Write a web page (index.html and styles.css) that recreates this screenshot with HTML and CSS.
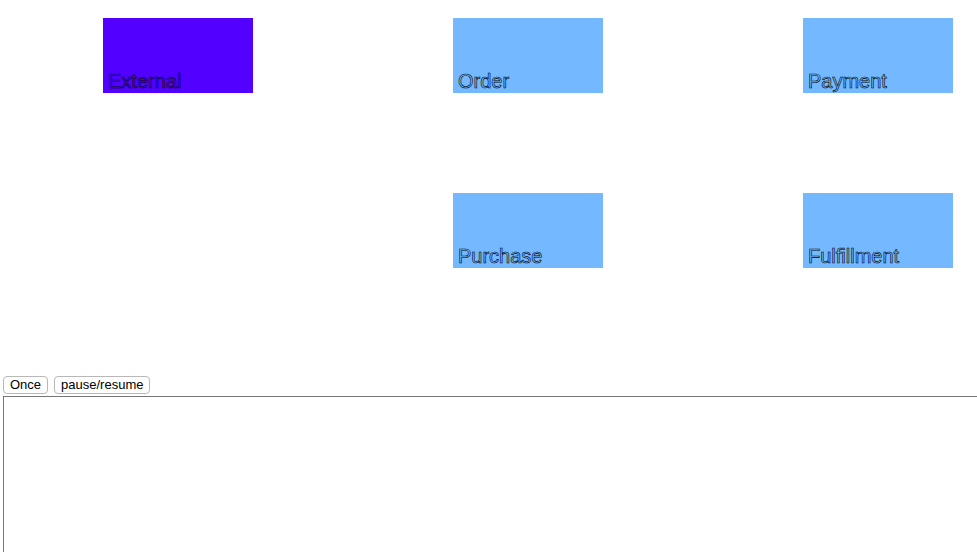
FILE: index.html
```html
<!DOCTYPE html>
<html>
<head>
<meta charset="utf-8">
<link rel="stylesheet" href="styles.css">
</head>
<body>
<svg class="diagram" width="977" height="376" viewBox="0 0 977 376">
  <g class="node node-active">
    <rect x="103" y="18" width="150" height="75"></rect>
    <text x="108" y="88">External</text>
  </g>
  <g class="node">
    <rect x="453" y="18" width="150" height="75"></rect>
    <text x="458" y="88">Order</text>
  </g>
  <g class="node">
    <rect x="803" y="18" width="150" height="75"></rect>
    <text x="808" y="88">Payment</text>
  </g>
  <g class="node">
    <rect x="453" y="193" width="150" height="75"></rect>
    <text x="458" y="263">Purchase</text>
  </g>
  <g class="node">
    <rect x="803" y="193" width="150" height="75"></rect>
    <text x="808" y="263">Fulfillment</text>
  </g>
</svg>
<div class="controls">
  <button class="btn">Once</button>
  <button class="btn">pause/resume</button>
</div>
<textarea class="log"></textarea>
</body>
</html>
```
FILE: styles.css
```css
html, body {
  margin: 0;
  padding: 0;
  background: #fff;
  overflow: hidden;
}
.diagram {
  display: block;
}
.node rect {
  fill: #74b9ff;
}
.node-active rect {
  fill: #5200ff;
}
.node text {
  font-family: "Liberation Sans", Arial, sans-serif;
  font-size: 20px;
  fill: none;
  stroke: #000;
  stroke-width: 0.6px;
}
.controls {
  display: flex;
  gap: 6px;
  padding-left: 3px;
  height: 20px;
  align-items: flex-start;
}
.btn {
  font-family: "Liberation Sans", Arial, sans-serif;
  font-size: 13px;
  line-height: 14px;
  height: 18px;
  padding: 0 6px;
  background: #fff;
  border: 1px solid #b8b8b8;
  border-radius: 4px;
  color: #000;
}
.log {
  display: block;
  margin: 0 0 0 3px;
  width: 1000px;
  height: 200px;
  border: 1px solid #767676;
  padding: 2px;
  resize: none;
}
```
